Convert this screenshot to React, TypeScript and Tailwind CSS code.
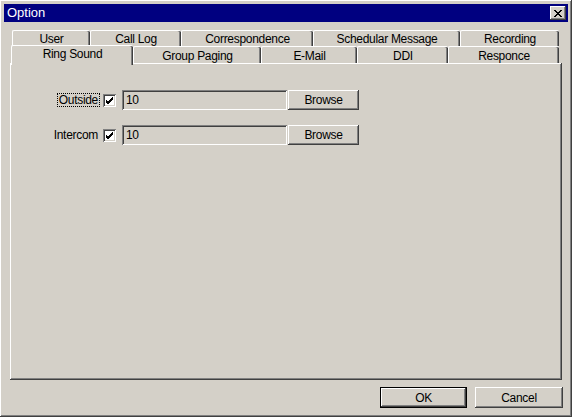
import React from 'react';

const raised =
  'shadow-[inset_-1px_-1px_#404040,inset_1px_1px_#ffffff,inset_-2px_-2px_#808080,inset_2px_2px_#d4d0c8]';
const sunken =
  'shadow-[inset_1px_1px_#808080,inset_-1px_-1px_#ffffff,inset_2px_2px_#404040,inset_-2px_-2px_#d4d0c8]';

type Tab = { label: string; w: number };

const backRow: Tab[] = [
  { label: 'User', w: 78 },
  { label: 'Call Log', w: 91 },
  { label: 'Correspondence', w: 132 },
  { label: 'Schedular Message', w: 147 },
  { label: 'Recording', w: 99 },
];

const frontRow: Tab[] = [
  { label: 'Group Paging', w: 128 },
  { label: 'E-Mail', w: 96 },
  { label: 'DDI', w: 91 },
  { label: 'Responce', w: 111 },
];

const TabItem: React.FC<{ tab: Tab; h: string }> = ({ tab, h }) => (
  <div
    className={`${h} flex items-start justify-center leading-[13px] bg-[#d4d0c8] border-l border-t border-white rounded-tl-[2px] rounded-tr-[2px] shadow-[inset_-1px_0_#404040,inset_-2px_0_#808080]`}
    style={{ width: tab.w }}
  >
    {tab.label}
  </div>
);

const CheckBox: React.FC = () => (
  <div className={`w-[13px] h-[13px] bg-white ${sunken} flex items-center justify-center`}>
    <svg width="9" height="9" viewBox="0 0 9 9">
      <path d="M1 4 L3 6 L8 1 M1 5 L3 7 L8 2 M1 6 L3 8 L8 3" stroke="#000" strokeWidth="1" fill="none" />
    </svg>
  </div>
);

const SoundRow: React.FC<{ label: string; focused?: boolean }> = ({ label, focused }) => (
  <div className="flex items-center h-[20px] pl-[38px]">
    <div className="w-[52px] flex justify-end">
      <span className={focused ? 'border border-dotted border-black px-[1px] leading-[12px]' : 'pr-[2px] leading-[12px]'}>
        {label}
      </span>
    </div>
    <div className="ml-[3px]">
      <CheckBox />
    </div>
    <div className={`ml-[6px] w-[165px] h-[20px] bg-[#d4d0c8] ${sunken} flex items-center pl-[4px]`}>10</div>
    <button className={`ml-[1px] w-[71px] h-[20px] bg-[#d4d0c8] ${raised} flex items-center justify-center`}>
      Browse
    </button>
  </div>
);

export default function App() {
  return (
    <div
      className={`w-[572px] h-[417px] bg-[#d4d0c8] p-[4px] flex flex-col font-['Liberation_Sans',Arial,sans-serif] text-[12px] text-black tracking-[-0.3px] ${raised}`}
    >
      <div className="h-[18px] bg-[#000080] flex items-center justify-between pl-[3px] pr-[2px]">
        <span className="text-white text-[13px] tracking-normal">Option</span>
        <div className={`w-[16px] h-[14px] bg-[#d4d0c8] ${raised} flex items-center justify-center`}>
          <svg width="8" height="7" viewBox="0 0 8 7">
            <path d="M0 0 L7 7 M1 0 L8 7 M7 0 L0 7 M8 0 L1 7" stroke="#000" strokeWidth="1" />
          </svg>
        </div>
      </div>

      <div className="px-[6px] pt-[8px] flex flex-col">
        <div className="flex ml-[2px] h-[16px]">
          {backRow.map((t) => (
            <TabItem key={t.label} tab={t} h="h-[16px] pt-[2px]" />
          ))}
        </div>
        <div className="flex items-end ml-[1px] h-[18px]">
          <div className="relative z-10 w-[122px] h-[20px] self-end -mb-[1px] bg-[#d4d0c8] border-l border-t border-white rounded-tl-[2px] rounded-tr-[2px] shadow-[inset_-1px_0_#404040,inset_-2px_0_#808080] flex items-start justify-center pt-[2px] leading-[13px]">
            Ring Sound
          </div>
          {frontRow.map((t) => (
            <TabItem key={t.label} tab={t} h="h-[17px] self-start pt-[3px]" />
          ))}
        </div>
        <div className={`h-[317px] -mt-[1px] bg-[#d4d0c8] ${raised} pt-[27px] flex flex-col gap-[15px]`}>
          <SoundRow label="Outside" focused />
          <SoundRow label="Intercom" />
        </div>
      </div>

      <div className="flex justify-end gap-[8px] pr-[5px] mt-[7px]">
        <button className="w-[87px] h-[21px] bg-[#d4d0c8] border border-black shadow-[inset_-1px_-1px_#404040,inset_1px_1px_#ffffff,inset_-2px_-2px_#808080] flex items-center justify-center">
          OK
        </button>
        <button className={`w-[88px] h-[21px] bg-[#d4d0c8] ${raised} flex items-center justify-center`}>
          Cancel
        </button>
      </div>
    </div>
  );
}
